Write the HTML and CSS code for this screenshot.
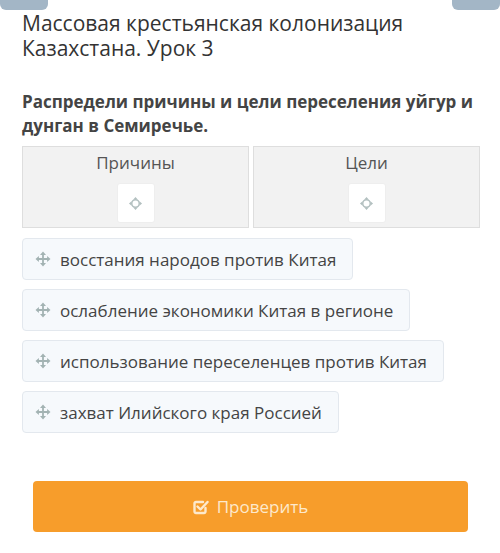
FILE: index.html
```html
<!DOCTYPE html>
<html lang="ru">
<head>
  <meta charset="UTF-8">
  <meta name="viewport" content="width=device-width, initial-scale=1.0">
  <title>Массовая крестьянская колонизация Казахстана. Урок 3</title>
  <link rel="stylesheet" href="styles.css">
</head>
<body>
  <div class="tabs">
    <span class="tab"></span>
    <span class="tab"></span>
  </div>

  <section class="lesson">
    <h1>Массовая крестьянская колонизация Казахстана. Урок 3</h1>
    <p class="task">Распредели причины и цели переселения уйгур и дунган в Семиречье.</p>

    <div class="zones">
      <div class="zone">
        <div class="zone-title">Причины</div>
        <div class="drop">
          <svg class="target" viewBox="0 0 16 16"><path class="heads" d="M8 1l2.4 2.8H5.6zM8 15l-2.4-2.8h4.8zM1 8l2.8-2.4v4.8zM15 8l-2.8 2.4V5.6z"/><circle cx="8" cy="8" r="4"/></svg>
        </div>
      </div>
      <div class="zone">
        <div class="zone-title">Цели</div>
        <div class="drop">
          <svg class="target" viewBox="0 0 16 16"><path class="heads" d="M8 1l2.4 2.8H5.6zM8 15l-2.4-2.8h4.8zM1 8l2.8-2.4v4.8zM15 8l-2.8 2.4V5.6z"/><circle cx="8" cy="8" r="4"/></svg>
        </div>
      </div>
    </div>

    <div class="items">
      <div class="item"><svg class="move" viewBox="0 0 16 16"><path class="heads" d="M8 0.5l3 3.4H5zM8 15.5l-3-3.4h6zM0.5 8l3.4-3v6zM15.5 8l-3.4 3V5z"/><path d="M8 3v10M3 8h10"/></svg>восстания народов против Китая</div>
      <div class="item"><svg class="move" viewBox="0 0 16 16"><path class="heads" d="M8 0.5l3 3.4H5zM8 15.5l-3-3.4h6zM0.5 8l3.4-3v6zM15.5 8l-3.4 3V5z"/><path d="M8 3v10M3 8h10"/></svg>ослабление экономики Китая в регионе</div>
      <div class="item"><svg class="move" viewBox="0 0 16 16"><path class="heads" d="M8 0.5l3 3.4H5zM8 15.5l-3-3.4h6zM0.5 8l3.4-3v6zM15.5 8l-3.4 3V5z"/><path d="M8 3v10M3 8h10"/></svg>использование переселенцев против Китая</div>
      <div class="item"><svg class="move" viewBox="0 0 16 16"><path class="heads" d="M8 0.5l3 3.4H5zM8 15.5l-3-3.4h6zM0.5 8l3.4-3v6zM15.5 8l-3.4 3V5z"/><path d="M8 3v10M3 8h10"/></svg>захват Илийского края Россией</div>
    </div>
  </section>

  <button class="check-btn">
    <svg class="check-icon" viewBox="0 0 16 16"><path d="M12.5 9v3.5a1.5 1.5 0 0 1-1.5 1.5H3a1.5 1.5 0 0 1-1.5-1.5V4.5A1.5 1.5 0 0 1 3 3h7"/><path d="M4.5 7.5l3 3 7-7.5"/></svg>
    Проверить
  </button>
</body>
</html>
```

FILE: styles.css
```css
html, body {
  margin: 0;
  padding: 0;
  font-family: 'Open Sans', 'Noto Sans', sans-serif;
}

body {
  background: #ffffff;
  color: #333;
  width: 500px;
  height: 553px;
  overflow: hidden;
}

.tabs {
  display: flex;
  justify-content: space-between;
}

.tab {
  width: 48px;
  height: 10px;
  background: #a3b6c6;
  border-radius: 0 0 6px 6px;
}

.lesson {
  padding: 0 22px;
}

h1 {
  font-size: 21px;
  font-weight: 400;
  line-height: 25px;
  color: #333;
  margin: 1px 0 0;
  width: 400px;
}

.task {
  font-size: 17px;
  font-weight: 700;
  line-height: 24px;
  color: #444;
  margin: 29px 0 0;
}

.zones {
  display: grid;
  grid-template-columns: 227px 227px;
  gap: 4px;
  margin-top: 8px;
}

.zone {
  background: #f2f2f2;
  border: 1px solid #dedede;
  height: 82px;
  box-sizing: border-box;
  text-align: center;
}

.zone-title {
  font-size: 17px;
  color: #555;
  line-height: 20px;
  margin-top: 6px;
}

.drop {
  width: 38px;
  height: 40px;
  margin: 10px auto 0;
  background: #fff;
  border: 1px solid #eee;
  border-radius: 3px;
  box-sizing: border-box;
  display: flex;
  align-items: center;
  justify-content: center;
}

.target {
  width: 15px;
  height: 15px;
  fill: none;
  stroke: #b3c0c0;
  stroke-width: 1.6;
}

.target .heads {
  fill: #b3c0c0;
  stroke: none;
}

.move {
  width: 16px;
  height: 16px;
  flex: none;
  fill: none;
  stroke: #a3b3b3;
  stroke-width: 1.8;
}

.move .heads {
  fill: #a3b3b3;
  stroke: none;
}

.items {
  display: flex;
  flex-direction: column;
  align-items: flex-start;
  gap: 9px;
  margin-top: 10px;
}

.item {
  display: flex;
  align-items: center;
  gap: 9px;
  height: 42px;
  box-sizing: border-box;
  padding: 0 16px 0 12px;
  background: #f6f9fc;
  border: 1px solid #e3e8ee;
  border-radius: 4px;
  font-size: 17px;
  color: #444;
}

.check-btn {
  display: flex;
  align-items: center;
  justify-content: center;
  gap: 8px;
  width: 435px;
  height: 51px;
  margin: 48px 0 0 33px;
  border: none;
  border-radius: 4px;
  background: #f79d2b;
  color: #fde9cc;
  font-family: 'Open Sans', sans-serif;
  font-size: 17px;
  cursor: pointer;
}

.check-icon {
  width: 16px;
  height: 16px;
  fill: none;
  stroke: #fde9cc;
  stroke-width: 2.4;
  stroke-linecap: round;
  stroke-linejoin: round;
}
```
